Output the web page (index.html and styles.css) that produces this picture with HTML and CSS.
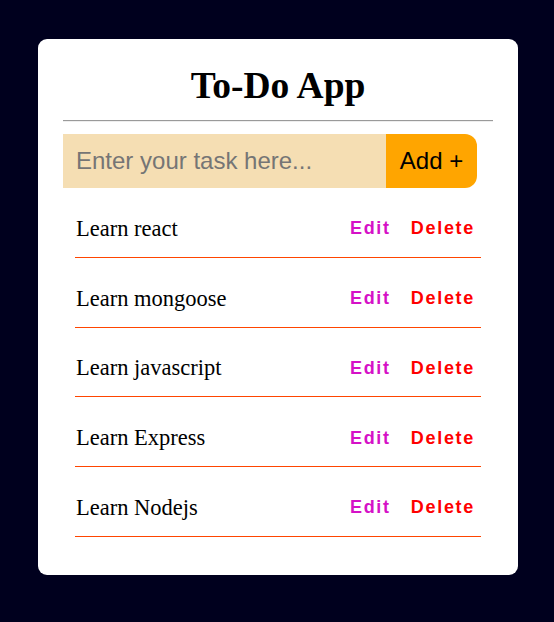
FILE: index.html
```html
<!DOCTYPE html>
<html lang="en">
<head>
<meta charset="utf-8">
<title>To-Do App</title>
<link rel="stylesheet" href="styles.css">
</head>
<body>
<div class="page">
  <div class="card">
    <h1 class="title">To-Do App</h1>
    <hr class="divider">
    <form class="add-form">
      <input class="task-input" type="text" placeholder="Enter your task here...">
      <button class="add-btn" type="button">Add +</button>
    </form>
    <ul class="task-list">
      <li class="task"><span class="task-text">Learn react</span><span class="actions"><button class="edit" type="button">Edit</button><button class="delete" type="button">Delete</button></span></li>
      <li class="task"><span class="task-text">Learn mongoose</span><span class="actions"><button class="edit" type="button">Edit</button><button class="delete" type="button">Delete</button></span></li>
      <li class="task"><span class="task-text">Learn javascript</span><span class="actions"><button class="edit" type="button">Edit</button><button class="delete" type="button">Delete</button></span></li>
      <li class="task"><span class="task-text">Learn Express</span><span class="actions"><button class="edit" type="button">Edit</button><button class="delete" type="button">Delete</button></span></li>
      <li class="task"><span class="task-text">Learn Nodejs</span><span class="actions"><button class="edit" type="button">Edit</button><button class="delete" type="button">Delete</button></span></li>
    </ul>
  </div>
</div>
</body>
</html>
```

FILE: styles.css
```css
html, body {
  margin: 0;
  padding: 0;
  background: #00001e;
  min-height: 100%;
}

body {
  font-family: "Liberation Serif", "Times New Roman", serif;
}

.page {
  padding: 39px 0 0 2px;
}

.card {
  width: 480px;
  height: 536px;
  box-sizing: border-box;
  margin: 0 auto;
  background: #ffffff;
  border-radius: 9px;
  padding: 26px 25px 25px;
}

.title {
  margin: 0;
  font-size: 37.5px;
  font-weight: bold;
  text-align: center;
  line-height: 41px;
  color: #000;
}

.divider {
  margin: 14px 0 12px;
  border: 0;
  border-top: 1px solid #9a9a9a;
  border-bottom: 1px solid #eeeeee;
  height: 0;
}

.add-form {
  display: flex;
  width: 414px;
  height: 54px;
  margin: 0;
}

.task-input {
  flex: 1;
  min-width: 0;
  border: none;
  outline: none;
  background: #f5deb3;
  font-family: "Liberation Sans", Arial, sans-serif;
  font-size: 24px;
  padding: 0 13px;
  margin: 0;
  color: #000;
}

.task-input::placeholder {
  color: #757575;
}

.add-btn {
  width: 91px;
  border: none;
  margin: 0;
  background: #ffa500;
  font-family: "Liberation Sans", Arial, sans-serif;
  font-size: 24px;
  color: #000;
  border-radius: 0 12px 12px 0;
  padding: 0;
}

.task-list {
  list-style: none;
  margin: 0 12px;
  padding: 0;
}

.task {
  display: flex;
  align-items: center;
  justify-content: space-between;
  box-sizing: border-box;
  height: 69.75px;
  padding-top: 13px;
  border-bottom: 1px solid #ff4500;
}

.task-text {
  font-size: 22.5px;
  color: #000;
  padding-left: 1px;
}

.actions {
  display: flex;
  gap: 20px;
  padding-right: 6px;
}

.edit, .delete {
  border: none;
  background: none;
  padding: 0;
  margin: 0;
  font-family: "Liberation Sans", Arial, sans-serif;
  font-weight: bold;
  font-size: 18px;
  letter-spacing: 1.7px;
}

.edit {
  color: #d511c7;
}

.delete {
  color: #ff0000;
}
```
